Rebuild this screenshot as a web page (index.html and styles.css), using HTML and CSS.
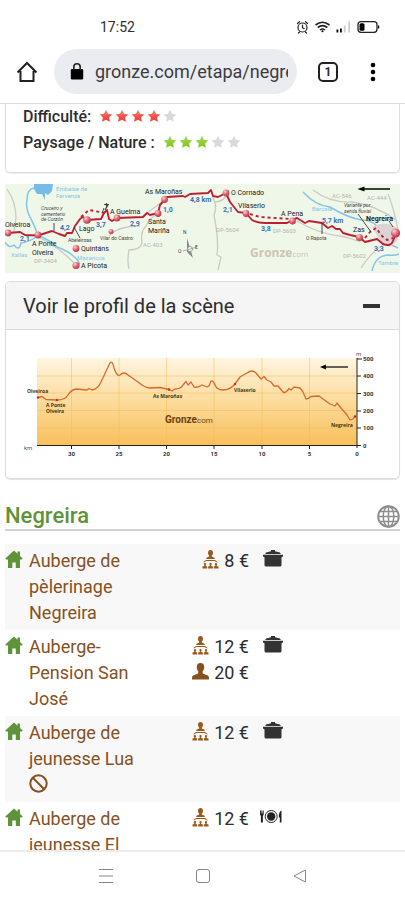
FILE: index.html
```html
<!DOCTYPE html>
<html lang="fr">
<head>
<meta charset="utf-8">
<meta name="viewport" content="width=device-width, initial-scale=1">
<title>Negreira - Gronze</title>
<link rel="stylesheet" href="styles.css">
</head>
<body>
<svg class="defs" aria-hidden="true">
  <defs>
    <linearGradient id="gred" x1="0" y1="0" x2="0" y2="1"><stop offset="0" stop-color="#fb7d75"/><stop offset="1" stop-color="#e8382f"/></linearGradient>
    <linearGradient id="ggreen" x1="0" y1="0" x2="0" y2="1"><stop offset="0" stop-color="#a5dc58"/><stop offset="1" stop-color="#7cc31c"/></linearGradient>
    <radialGradient id="ball" cx=".35" cy=".3" r=".8"><stop offset="0" stop-color="#fbd3d6"/><stop offset=".5" stop-color="#dd6573"/><stop offset="1" stop-color="#bb2438"/></radialGradient>
    <linearGradient id="sand" x1="0" y1="0" x2="0" y2="1"><stop offset="0" stop-color="#fff5e1"/><stop offset=".5" stop-color="#fcdb9b"/><stop offset="1" stop-color="#f9bf5b"/></linearGradient>
    <symbol id="star" viewBox="0 0 14 14"><path d="M7 .8l1.900 4 4.400.6-3.200 3 .8 4.400L7 10.700l-3.900 2.100.8-4.400-3.200-3 4.400-.6z"/></symbol>
    <symbol id="house" viewBox="0 0 18 18"><path d="M9 .5L.3 8.400l.8 1H3V18h4.300v-5.500h3.500V18H15V9.400h1.900l.8-1L15 6V1.500h-2.500v2.200z"/></symbol>
    <symbol id="dorm" viewBox="0 0 17 19"><path d="M8.500 0c1.700 0 2.500 1.200 2.500 2.700 0 1.400-.5 2.200-1.100 2.800v1l2.600 1.200.4 1.400H4.100l.4-1.400 2.600-1.200v-1C6.500 4.900 6 4.100 6 2.700 6 1.200 6.800 0 8.500 0zM4 10h9l3 2.300h-1.500L12.600 11H4.400l-1.900 1.300H1z"/><path d="M3 13a1.100 1.100 0 0 1 .7 2v1l1.500.6v1.900H.5v-1.900L2.200 16v-1A1.100 1.100 0 0 1 3 13zM8.500 13a1.100 1.100 0 0 1 .7 2v1l1.700.6v1.900H6.100v-1.900l1.700-.6v-1a1.100 1.100 0 0 1 .7-2zM14 13a1.100 1.100 0 0 1 .7 2v1l1.800.6v1.900h-4.700v-1.900l1.500-.6v-1a1.100 1.100 0 0 1 .7-2z"/></symbol>
    <symbol id="person" viewBox="0 0 17 17"><path d="M8.500 0c2.400 0 3.800 1.600 3.700 4 0 2.200-.7 3.400-1.500 4.300v1.900c1.500 1.200 4.900 1.500 5.900 3 .4.700.4 2 .4 3.300H0c0-1.300 0-2.600.4-3.300 1-1.500 4.400-1.800 5.900-3V8.300C5.500 7.400 4.800 6.200 4.800 4 4.700 1.600 6.100 0 8.500 0z"/></symbol>
    <symbol id="pot" viewBox="0 0 20 17"><path d="M8 0h4v1.200l5 1.200.8 1.600H2.200L3 2.400l5-1.200zM0 4.800h20v1.600l-1.500.9V15q0 1.500-1.500 1.500H3q-1.500 0-1.500-1.500V7.300L0 6.400z"/></symbol>
    <symbol id="plate" viewBox="0 0 22 14"><path d="M0 .5h.9v3h.5v-3h.9v3h.5v-3h.9v4L2.900 6v6.500H.9V6L0 4.500zM21.500.500v12h-1.700V7.500h-.9c-.3-3 .5-6.300 2.600-7z"/><circle cx="11.200" cy="6.500" r="6" fill="none" stroke="#222" stroke-width="1"/><circle cx="11.200" cy="6.500" r="4.200"/></symbol>
  </defs>
</svg>

<header class="browser">
  <div class="status">
    <span>17:52</span>
    <svg class="status-icons" viewBox="296 20 84 14" aria-hidden="true">
      <g fill="none" stroke="#222" stroke-width="1.200" stroke-linecap="round"><circle cx="302.500" cy="27.500" r="4.500"/><path d="M302.500 25v2.700l1.700 1M297.500 23.500l2-1.800M307.500 23.500l-2-1.800M299.500 32l-1 1M305.500 32l1 1"/></g>
      <g fill="none" stroke="#222" stroke-width="1.600"><path d="M315.500 25q7-5.500 14 0M317.700 27.500q4.800-3.800 9.600 0M320 30q2.500-2 5 0"/></g><circle cx="322.500" cy="31.300" r="1"/>
      <path d="M336.500 29.500h1.800v3h-1.800zM340 28.500h1.800v4H340z"/><path fill="#ccc" d="M343.800 25.500h1.800v7h-1.800zM348.300 21.500h1.800v11h-1.800z"/>
      <rect x="358" y="21.700" width="19" height="10.600" rx="3" fill="none" stroke="#222" stroke-width="1.300"/><rect x="359.500" y="23.200" width="5" height="7.600" rx="1.500"/><path d="M378 25.500h1.200v3H378z"/>
    </svg>
  </div>
  <div class="toolbar">
    <button class="tool" aria-label="Accueil"><svg width="22" height="22" viewBox="0 0 22 22"><path d="M4.500 10v10h13V10M1.500 11.500L11 2l9.500 9.500" fill="none" stroke="#202124" stroke-width="2"/></svg></button>
    <label class="omnibox">
      <svg width="14" height="17" viewBox="0 0 14 17" aria-hidden="true"><path d="M2 6h10q1.200 0 1.200 1.200v8q0 1.200-1.200 1.200H2q-1.200 0-1.200-1.200v-8Q.8 6 2 6z"/><path d="M3.800 7V4a3.200 3.200 0 0 1 6.400 0v3" fill="none" stroke="#202124" stroke-width="1.600"/></svg>
      <input type="text" aria-label="Adresse" value="gronze.com/etapa/negreira">
    </label>
    <button class="tool tab-button" aria-label="Onglets ouverts"><span class="tab-count">1</span></button>
    <button class="tool" aria-label="Menu"><svg width="6" height="20" viewBox="0 0 6 20"><circle cx="3" cy="3" r="2.300"/><circle cx="3" cy="10" r="2.300"/><circle cx="3" cy="17" r="2.300"/></svg></button>
  </div>
</header>

<main>
  <section class="ratings">
    <div class="rating"><b>Difficulté:</b><span class="stars red" role="img" aria-label="4 sur 5"><svg><use href="#star"/></svg><svg><use href="#star"/></svg><svg><use href="#star"/></svg><svg><use href="#star"/></svg><svg class="off"><use href="#star"/></svg></span></div>
    <div class="rating"><b>Paysage / Nature :</b><span class="stars green" role="img" aria-label="3 sur 5"><svg><use href="#star"/></svg><svg><use href="#star"/></svg><svg><use href="#star"/></svg><svg class="off"><use href="#star"/></svg><svg class="off"><use href="#star"/></svg></span></div>
  </section>

  <svg class="map" viewBox="5 184 395 89">
    <rect x="5" y="184" width="395" height="89" fill="#eff7e9"/>
    <g fill="none" stroke="#c9cbc6" stroke-width="1.300">
      <path d="M7 189Q16 202 16 218L14 232M38 237Q58 246 76 265M109 236Q118 226 140 226M158 213Q150 218 146 226Q140 232 142 243Q140 250 129 250Q127 261 129 269M142 217L163 201M212 196Q218 206 214 215Q219 240 217 255L221 257 218 270M214 202Q224 202 227 194M313 190Q330 203 352 202Q375 205 396 220M388 194Q395 212 398 230M297 221Q318 234 345 237L361 242M361 268Q375 246 392 241"/>
    </g>
    <g fill="none" stroke="#86c4e9" stroke-width="1.500">
      <path d="M34 188Q27 189 27 200C24 214 37 225 37 235Q50 240 57 247Q74 253 80 264M5 242Q9 249 14 245Q19 252 21 243Q29 242 36 237M303 192Q316 206 330 207Q348 218 362 220Q377 220 381 235Q386 243 398 248M372 271Q375 256 388 255Q394 256 399 254"/>
    </g>
    <path d="M34 184h19l-1 7-4 4-3-2v7l-3-6h-5l-3-5z" fill="#76bce8"/>
    <path d="M372 227q8-5 16-3l8 3 2 13-8 7-9-5z" fill="#dcd3d5"/>
    <g fill="none" stroke="#bd2034" stroke-width="1.900" stroke-linejoin="round">
      <path d="M8 233L20 232 25 235 38 235.500 52 231 59 234 65 236 67 233 72 233 75 226 80 219 83 217 87 220 101 219 104 213 107 210 109 219 112 221 117 218 143 217 147 213 150 215 158 213 160 205 167 197 183 196 185 197 190 194 208 193 211 190 213 196 218 197 226 193 230 202 238 212 246 213 252 220Q257 223 265 223L287 223 292 220 297 218 305 223 309 221 322 223 328 228 332 226 336 229 340 229 343 233 350 235 359 237 365 242 377 239 383 244Q391 247 393 241L396 233"/>
      <path stroke-dasharray="3 3" d="M81 217L89 210 105 213M250 214L260 217 291 219M365 238L370 232 376 228 382 236 387 240 393 238"/>
    </g>
    <path d="M54 223v8M74 227l6 11M322 223v11M104 208l-2 5M358 214l13 18M389 221l4 6" stroke="#222" stroke-width=".8" fill="none"/>
    <path d="M104 204.500h5M106.500 203v5M105 210l3-5" stroke="#444" stroke-width="1.200"/>
    <g fill="url(#ball)">
      <circle cx="8" cy="233" r="3.400"/><circle cx="38" cy="235" r="3.400"/><circle cx="87" cy="220" r="3.800"/><circle cx="117" cy="218" r="3.400"/><circle cx="111" cy="231.500" r="2.500"/><circle cx="76" cy="248.500" r="3.400"/><circle cx="76" cy="265.500" r="3.600"/><circle cx="158" cy="213.500" r="3.400"/><circle cx="164.500" cy="199.500" r="3.400"/><circle cx="226" cy="193" r="3.400"/><circle cx="246" cy="213.500" r="3.400"/><circle cx="292.500" cy="221" r="3.400"/><circle cx="359.500" cy="237.500" r="3.600"/><circle cx="395.500" cy="233" r="4.600"/>
    </g>
    <path d="M362 189h28" stroke="#111" stroke-width="1.600"/><path d="M357.500 189l7-2.600v5.200z"/>
    <path d="M187 238l6 20-6-6z" fill="#888"/><circle cx="190" cy="249" r="2.500" fill="#fff" stroke="#999"/><path d="M183 251l14-4" stroke="#999" stroke-width=".8"/>
    <g class="place">
      <text x="5" y="227">Olveiroa</text><text x="32" y="246">A Ponte</text><text x="32" y="255">Olveira</text><text x="79" y="231">Lago</text><text x="110" y="214">A Gueima</text><text x="81" y="251">Quintáns</text><text x="81" y="268">A Picota</text><text x="145" y="194">As Maroñas</text><text x="148" y="224">Santa</text><text x="148" y="233">Mariña</text><text x="231" y="195">O Cornado</text><text x="238" y="208">Vilaserio</text><text x="281" y="216">A Pena</text><text x="353" y="232">Zas</text><text x="366" y="221" class="strong">Negreira</text>
    </g>
    <g class="minor"><text x="68" y="242">Abeleiroas</text><text x="100" y="240">Vilar do Castro</text><text x="306" y="240">O Rapota</text><g class="slant"><text x="41" y="210">Cruceiro y</text><text x="41" y="216">cementerio</text><text x="41" y="221">de Corzón</text><text x="344" y="207">Variante por</text><text x="344" y="213">senda fluvial</text></g><text x="183" y="234">N</text><text x="178" y="253">O</text><text x="195" y="249">E</text></g>
    <g class="km"><text x="20" y="241">2,1</text><text x="60" y="230">4,2</text><text x="96" y="227">3,7</text><text x="130" y="226">2,9</text><text x="163" y="212">1,0</text><text x="190" y="202">4,8 km</text><text x="223" y="212">2,1</text><text x="261" y="231">3,8</text><text x="322" y="223">5,7 km</text><text x="374" y="251">3,3</text></g>
    <g class="water"><text x="56" y="191">Embalse de</text><text x="56" y="198">Fervenza</text><text x="11" y="257">Xallas</text><text x="77" y="260">Mazaricos</text><text x="312" y="211">Barcala</text><text x="378" y="265">Tambre</text></g>
    <g class="road"><text x="34" y="263">DP-3404</text><text x="143" y="247">AC-403</text><text x="216" y="232">DP-5604</text><text x="273" y="233">DP-5603</text><text x="332" y="198">AC-546</text><text x="367" y="200">AC-444</text><text x="343" y="258">DP-5602</text></g>
    <text x="250" y="257" class="brand-pale">Gronze<tspan class="thin">com</tspan></text>
  </svg>

  <section class="card">
    <button class="card-head" aria-expanded="true"><span>Voir le profil de la scène</span><span class="minus"></span></button>
    <div class="card-body">
      <svg class="profile" viewBox="22 346 361 116">
        <rect x="37" y="358" width="320" height="87.500" fill="url(#sand)"/>
        <path d="M37 376h320M37 393h320M37 410.500h320M37 428h320M71.500 358v87M119 358v87M166.500 358v87M214 358v87M262 358v87M309.500 358v87" stroke="#f2bd55" stroke-opacity=".65" stroke-width=".8"/>
        <path d="M38 397.500L42 396.500 46 399.500 57 400Q65 400 68 395T76 389L87 390 89 388.500 92 390Q98 389 101 382L109 365Q112 358 114 368 117 377 120 375 124 371 128 375L138 382Q145 388 150 388L160 387.500 169 389.500 172 391 175 389Q181 389 183 385L186 381.500 188 385 191 382 194 387Q198 388 202 385L207 387 209 386 211 381Q213 380 215 385 217 390 223 390 230 390 235 384L240 377 247 373Q252 369 256 373L261 379 264 376.500 267 380 271 382 274 386 278 386 283 392Q285 394 289 388.500L291 390 294 387 300 388 303 392 306 399Q308 399 311 396.500L319 396 323 399 330 404 335 406 337 403 341 408 347 415 350 420 353 419 355 416" fill="none" stroke="#d9692f" stroke-width="1.300" stroke-linejoin="round"/>
        <g fill="#d5281e"><circle cx="38" cy="397.500" r="1.200"/><circle cx="57" cy="400" r="1.200"/><circle cx="169" cy="389.500" r="1.200"/><circle cx="235" cy="384" r="1.200"/><circle cx="355" cy="416.500" r="1.300"/></g>
        <path d="M37 445.500h324M357 358v90M357 359h5M357 376h4M357 393.500h4M357 411h4M357 428h4M71.500 445v4M119 445v4M166.500 445v4M214 445v4M262 445v4M309.500 445v4" stroke="#222" fill="none"/>
        <path d="M324 367h24" stroke="#111" stroke-width="1.300"/><path d="M320 367l6-2.600v5.200z"/>
        <g class="axis"><text x="363" y="361">500</text><text x="363" y="378">400</text><text x="363" y="396">300</text><text x="363" y="413">200</text><text x="363" y="430">100</text><text x="363" y="448">0</text></g>
        <g class="axis mid"><text x="71.500" y="456">30</text><text x="119" y="456">25</text><text x="166.500" y="456">20</text><text x="214" y="456">15</text><text x="262" y="456">10</text><text x="309.500" y="456">5</text><text x="357" y="456">0</text></g>
        <g class="unit"><text x="24" y="450">km</text><text x="356" y="356">m</text></g>
        <g class="spot"><text x="27" y="393">Olveiroa</text><text x="46" y="407">A Ponte</text><text x="46" y="413">Olveira</text><text x="153" y="398">As Maroñas</text><text x="234" y="392">Vilaserio</text><text x="331" y="427">Negreira</text></g>
        <text x="165" y="423" class="brand">Gronze<tspan class="thin">com</tspan></text>
      </svg>
    </div>
  </section>

  <div class="town">
    <h2>Negreira</h2>
    <a href="#web" aria-label="Site web"><svg width="23" height="23" viewBox="0 0 23 23" fill="none" stroke="#8e8e8e" stroke-width="1.500"><circle cx="11.500" cy="11.500" r="10.300" stroke-width="1.900"/><ellipse cx="11.500" cy="11.500" rx="5.300" ry="10.300"/><path d="M11.500 1v21M1 11.500h21M3 6.500h17M3 16.500h17"/></svg></a>
  </div>

  <table class="lodgings">
    <colgroup><col class="c-icon"><col class="c-name"><col class="c-price"><col></colgroup>
    <tbody>
      <tr><td><svg class="house"><use href="#house"/></svg></td><th scope="row"><a href="#1">Auberge de pèlerinage Negreira</a></th><td class="price"><div><svg class="dorm"><use href="#dorm"/></svg>8 €</div></td><td class="service"><svg class="pot"><use href="#pot"/></svg></td></tr>
      <tr><td><svg class="house"><use href="#house"/></svg></td><th scope="row"><a href="#2">Auberge-Pension San José</a></th><td class="price"><div><svg class="dorm"><use href="#dorm"/></svg>12 €</div><div><svg class="person"><use href="#person"/></svg>20 €</div></td><td class="service"><svg class="pot"><use href="#pot"/></svg></td></tr>
      <tr><td><svg class="house"><use href="#house"/></svg></td><th scope="row"><a href="#3">Auberge de jeunesse Lua <svg class="closed" viewBox="0 0 19 19"><circle cx="9.500" cy="9.500" r="8.200"/><path d="M3.800 3.800l11.400 11.400"/></svg></a></th><td class="price"><div><svg class="dorm"><use href="#dorm"/></svg>12 €</div></td><td class="service"><svg class="pot"><use href="#pot"/></svg></td></tr>
      <tr><td><svg class="house"><use href="#house"/></svg></td><th scope="row"><a href="#4">Auberge de jeunesse El</a></th><td class="price"><div><svg class="dorm"><use href="#dorm"/></svg>12 €</div></td><td class="service"><svg class="plate"><use href="#plate"/></svg></td></tr>
    </tbody>
  </table>
</main>

<nav class="system" aria-label="Système">
  <button aria-label="Applications récentes"><svg width="16" height="16" viewBox="0 0 16 16"><path d="M1 1.500h14M1 8h14M1 14.500h14"/></svg></button>
  <button aria-label="Écran d'accueil"><svg width="16" height="16" viewBox="0 0 16 16"><rect x="1.500" y="1.500" width="13" height="13" rx="2.500"/></svg></button>
  <button aria-label="Retour"><svg width="16" height="16" viewBox="0 0 16 16"><path d="M13.500 2v12L2 8z" stroke-linejoin="round"/></svg></button>
</nav>
</body>
</html>
```
FILE: styles.css
```css
* { box-sizing: border-box; }
body {
  margin: 0;
  height: 100vh;
  display: flex;
  flex-direction: column;
  overflow: hidden;
  background: #fff;
  color: #2d2d2d;
  font: 18px/26px Roboto, sans-serif;
}
svg { display: block; }
button { border: 0; padding: 0; background: none; color: inherit; font: inherit; }
.defs { position: absolute; width: 0; height: 0; }

.browser { flex: none; border-bottom: 1px solid #dcdcdc; }
.status {
  display: flex;
  justify-content: space-between;
  align-items: center;
  padding: 14px 25px 9px 100px;
  font-size: 14px;
}
.status-icons { width: 84px; height: 14px; }
.toolbar {
  display: flex;
  align-items: center;
  padding: 0 17px 9px 12px;
}
.tool {
  flex: none;
  display: flex;
  justify-content: center;
  align-items: center;
  width: 30px;
  height: 45px;
}
.omnibox {
  flex: 1;
  min-width: 0;
  display: flex;
  align-items: center;
  gap: 11px;
  height: 45px;
  margin-left: 12px;
  padding: 0 9px 0 16px;
  border-radius: 23px;
  background: #ebecf1;
}
.omnibox svg { flex: none; }
.omnibox input {
  flex: 1;
  min-width: 0;
  padding: 0;
  border: 0;
  outline: 0;
  background: none;
  color: #3a3b3f;
  font: 18px/26px Roboto, sans-serif;
}
.tab-button { margin: 0 15px 0 16px; }
.tab-count {
  width: 20px;
  height: 20px;
  border: 2px solid #202124;
  border-radius: 5px;
  font-size: 12px;
  line-height: 16px;
  font-weight: 700;
}

main { flex: 1; min-height: 0; overflow: hidden; padding: 0 5px; }
.ratings {
  padding: 0 17px 16px;
  border: 1px solid #dcdcdc;
  border-top: 0;
  border-radius: 0 0 5px 5px;
  box-shadow: 0 1px 1px #eee;
}
.rating { display: flex; align-items: center; gap: 8px; font-size: 16px; }
.rating b { font-weight: 500; }
.stars { display: flex; gap: 2px; padding-bottom: 2px; }
.stars svg { width: 14px; height: 14px; }
.red svg { fill: url(#gred); }
.green svg { fill: url(#ggreen); }
.stars .off { fill: #d9d9d9; }

.map { width: 100%; margin-top: 11px; }
.place { font-size: 7px; fill: #222; }
.strong { font-weight: 700; }
.minor { font-size: 5px; fill: #444; }
.slant { font-style: italic; }
.km { font-size: 7px; font-weight: 700; fill: #3971b8; }
.water { font-size: 6px; fill: #86c4e9; }
.road { font-size: 6px; fill: #b3b6b0; }
.brand-pale { font: 700 12px "Open Sans", sans-serif; fill: #cdc5b3; }
.brand { font-size: 10px; font-weight: 700; fill: #68420b; }
.thin { font-weight: 400; font-size: 8px; }

.card {
  margin-top: 8px;
  border: 1px solid #dcdcdc;
  border-radius: 5px;
  box-shadow: 0 1px 1px #e4e4e4;
}
.card-head {
  display: flex;
  justify-content: space-between;
  align-items: center;
  width: 100%;
  height: 48px;
  padding: 0 19px 0 17px;
  border-bottom: 1px solid #dcdcdc;
  border-radius: 4px 4px 0 0;
  background: #f5f5f5;
  font-size: 20px;
}
.minus { width: 17px; height: 4px; background: #333; }
.card-body { padding: 16px; }
.profile { width: 100%; }
.axis { font-size: 6px; font-weight: 700; fill: #333; }
.mid { text-anchor: middle; }
.unit { font-size: 6px; fill: #555; }
.spot { font: 700 5px "Open Sans", sans-serif; fill: #4a3210; }

.town {
  display: flex;
  justify-content: space-between;
  align-items: center;
  margin: 24px 0 13px;
  border-bottom: 2px solid #d3d3d3;
}
.town h2 { margin: 0; font-size: 22px; line-height: 26px; font-weight: 500; color: #5f933a; }

.lodgings { width: 100%; table-layout: fixed; border-collapse: collapse; }
.lodgings tr { height: 86px; }
.lodgings tr:nth-child(odd) { background: #f8f8f8; }
.lodgings td, .lodgings th { padding: 4px 0; vertical-align: top; text-align: left; font-weight: 400; }
.lodgings a { color: #86511f; text-decoration: none; }
.c-icon { width: 24px; }
.c-name { width: 110px; }
.c-price { width: 110px; }
.price div { display: flex; justify-content: flex-end; align-items: center; gap: 5px; }
.lodgings .service { padding: 6px 0 0 14px; }
.house { width: 18px; height: 18px; margin-top: 2px; fill: #5f933a; }
.dorm { width: 17px; height: 19px; margin-bottom: 4px; fill: #9a5a1c; }
.person { width: 17px; height: 17px; margin-bottom: 4px; fill: #86511f; }
.pot { width: 20px; height: 17px; fill: #333; }
.plate { width: 22px; height: 14px; margin: 2px 0 0 -3px; fill: #222; }
.closed { display: inline-block; width: 19px; height: 19px; vertical-align: -2px; fill: none; stroke: #86511f; stroke-width: 2; }

.system {
  flex: none;
  display: flex;
  justify-content: center;
  gap: 81px;
  height: 50px;
  border-top: 2px solid #ececec;
}
.system button { display: flex; align-items: center; }
.system svg { fill: none; stroke: #858585; stroke-width: 1; }
```
